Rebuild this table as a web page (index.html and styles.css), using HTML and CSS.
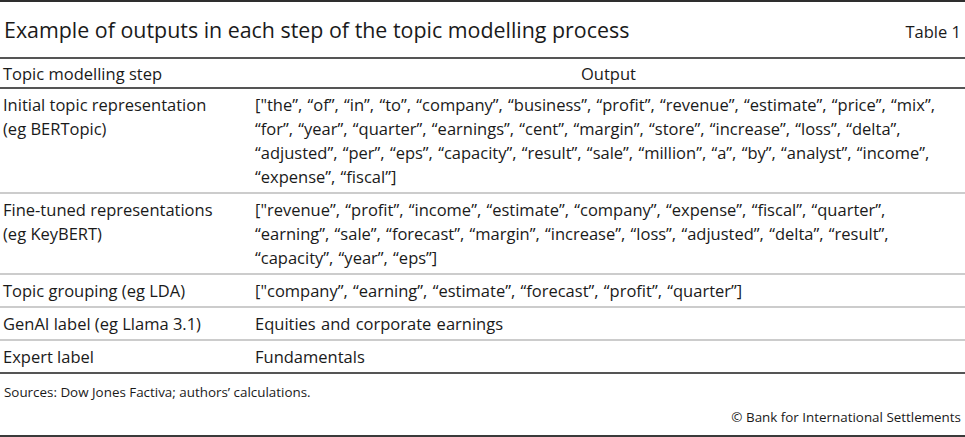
FILE: index.html
```html
<!DOCTYPE html>
<html lang="en">
<head>
<meta charset="utf-8">
<title>Table 1</title>
<link rel="stylesheet" href="styles.css">
</head>
<body>
<div class="page">
  <header class="title-bar">
    <h1 class="title">Example of outputs in each step of the topic modelling process</h1>
    <span class="tag">Table 1</span>
  </header>
  <table class="data">
    <thead>
      <tr><th class="step">Topic modelling step</th><th class="out">Output</th></tr>
    </thead>
    <tbody>
      <tr>
        <td class="step">Initial topic representation<br>(eg BERTopic)</td>
        <td class="out">["the”, “of”, “in”, “to”, “company”, “business”, “profit”, “revenue”, “estimate”, “price”, “mix”,<br>“for”, “year”, “quarter”, “earnings”, “cent”, “margin”, “store”, “increase”, “loss”, “delta”,<br>“adjusted”, “per”, “eps”, “capacity”, “result”, “sale”, “million”, “a”, “by”, “analyst”, “income”,<br>“expense”, “fiscal”]</td>
      </tr>
      <tr>
        <td class="step">Fine-tuned representations<br>(eg KeyBERT)</td>
        <td class="out">["revenue”, “profit”, “income”, “estimate”, “company”, “expense”, “fiscal”, “quarter”,<br>“earning”, “sale”, “forecast”, “margin”, “increase”, “loss”, “adjusted”, “delta”, “result”,<br>“capacity”, “year”, “eps”]</td>
      </tr>
      <tr>
        <td class="step">Topic grouping (eg LDA)</td>
        <td class="out">["company”, “earning”, “estimate”, “forecast”, “profit”, “quarter”]</td>
      </tr>
      <tr>
        <td class="step">GenAI label (eg Llama 3.1)</td>
        <td class="out">Equities and corporate earnings</td>
      </tr>
      <tr>
        <td class="step">Expert label</td>
        <td class="out">Fundamentals</td>
      </tr>
    </tbody>
  </table>
  <p class="source">Sources: Dow Jones Factiva; authors’ calculations.</p>
  <footer class="copy">© Bank for International Settlements</footer>
</div>
</body>
</html>
```
FILE: styles.css
```css
html, body {
  margin: 0;
  padding: 0;
  background: #ffffff;
}

.page {
  width: 965px;
  height: 437px;
  box-sizing: border-box;
  border-top: 2px solid #2e2e2e;
  border-bottom: 2px solid #3a3a3a;
  font-family: "Open Sans", "Noto Sans", sans-serif;
  color: #1a1a1a;
  display: flex;
  flex-direction: column;
}

.title-bar {
  display: flex;
  justify-content: space-between;
  align-items: baseline;
  padding: 14px 4px 0 4px;
  height: 57px;
  box-sizing: border-box;
  border-bottom: 2px solid #555555;
}

.title {
  margin: 0;
  font-size: 21.4px;
  font-weight: 400;
  line-height: 28px;
}

.tag {
  font-size: 16.5px;
}

.data {
  border-collapse: collapse;
  width: 100%;
  font-size: 16.5px;
  line-height: 24px;
  border-bottom: 2px solid #555555;
}

.data th {
  font-weight: 400;
  padding: 3px 3px 1px 3px;
  border-bottom: 2px solid #555555;
}

.data th.step {
  text-align: left;
}

.data th.out {
  text-align: center;
}

.data td {
  vertical-align: top;
  padding: 4px 3px 3px 3px;
  border-bottom: 2px solid #cccccc;
}

.data td.out {
  word-spacing: 1px;
}

.data tbody tr:last-child td {
  border-bottom: none;
}

.data .step {
  width: 246px;
}

.source {
  margin: 0;
  padding: 8px 4px 0 4px;
  font-size: 13.4px;
  line-height: 20px;
  flex: 1;
}

.copy {
  text-align: right;
  font-size: 13.4px;
  line-height: 20px;
  padding: 0 4px 8px 0;
}
```
